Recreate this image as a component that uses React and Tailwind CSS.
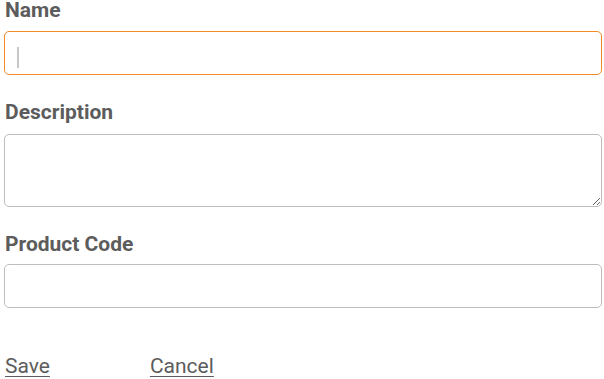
import React from "react";

export default function App() {
  const font = { fontFamily: "Roboto, 'Noto Sans', sans-serif" };
  return (
    <div className="w-[604px] h-[379px] bg-white pl-[4px] pr-[2px] overflow-hidden" style={font}>
      <form className="flex flex-col" onSubmit={(e) => e.preventDefault()}>
        <label className="block text-[21px] leading-[21px] font-bold text-[#5c5c5c] pl-[1px]">Name</label>
        <div className="relative mt-[10px]">
          <input
            type="text"
            className="block w-full h-[44px] rounded-[5px] border border-[#f28b25] outline-none px-[13px] text-[18px] text-[#333] caret-transparent"
          />
          <span className="absolute left-[13px] top-[16px] w-[2px] h-[21px] bg-[#c8c8c8]" />
        </div>

        <label className="block mt-[27px] text-[21px] leading-[21px] font-bold text-[#5c5c5c] pl-[1px]">Description</label>
        <textarea
          className="block mt-[11px] w-full h-[73px] rounded-[5px] border border-[#bdbdbd] outline-none px-[13px] py-[8px] text-[18px] text-[#333]"
        />

        <label className="block mt-[27px] text-[21px] leading-[21px] font-bold text-[#5c5c5c] pl-[1px]">Product Code</label>
        <input
          type="text"
          className="block mt-[9px] w-full h-[44px] rounded-[5px] border border-[#bdbdbd] outline-none px-[13px] text-[18px] text-[#333]"
        />

        <div className="flex mt-[46px] text-[21px] leading-[24px] text-[#5c5c5c] pl-[1px]">
          <button type="submit" className="underline underline-offset-[3px] decoration-1">Save</button>
          <button type="button" className="ml-[100px] underline underline-offset-[3px] decoration-1">Cancel</button>
        </div>
      </form>
    </div>
  );
}
